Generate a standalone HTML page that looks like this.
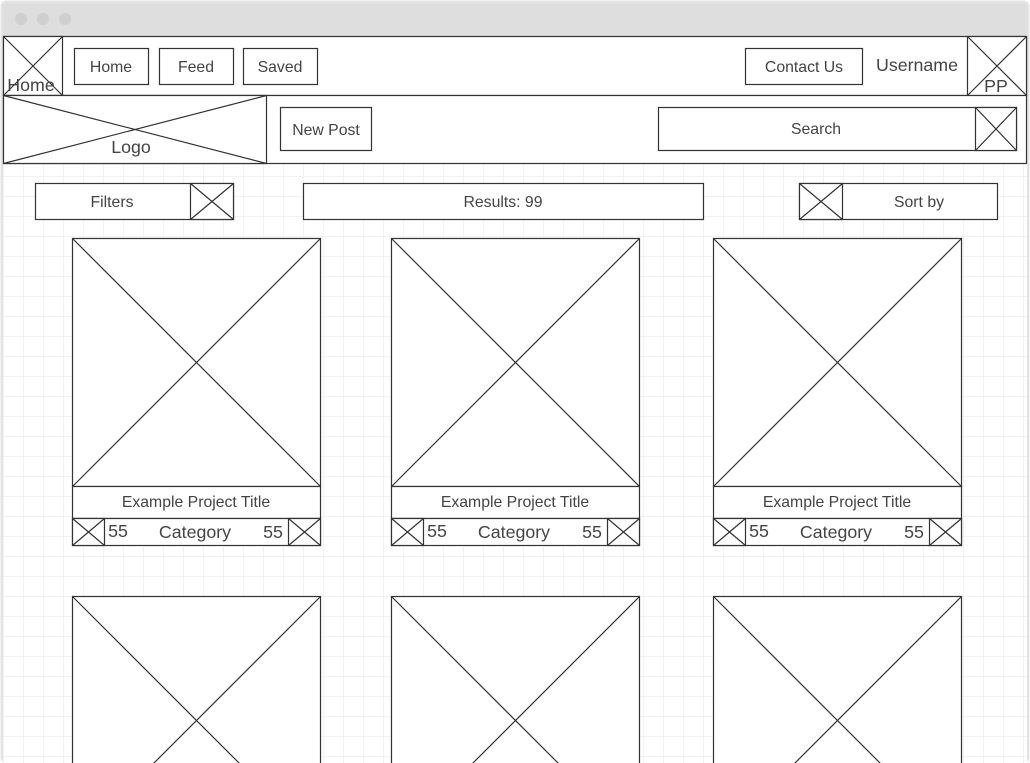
<!DOCTYPE html>
<html><head><meta charset="utf-8"><style>
html,body{margin:0;padding:0;background:#fff;width:1030px;height:763px;overflow:hidden;}
svg{display:block;}
text{font-family:"Liberation Sans",sans-serif;fill:#444;}
</style></head><body>
<svg width="1030" height="763" viewBox="0 0 1030 763" xmlns="http://www.w3.org/2000/svg">
<defs>
<pattern id="g" x="3" y="-4" width="20" height="20" patternUnits="userSpaceOnUse">
<path d="M0 0V20M0 0H20" stroke="#e6e6e6" stroke-width="1" fill="none"/>
</pattern>
</defs>
<rect x="0" y="0" width="1030" height="763" fill="#fff"/>
<rect x="0.5" y="0.5" width="1029" height="762.5" rx="6" fill="#e4e4e4"/>
<rect x="3" y="3" width="1024" height="33" rx="4" fill="#dedede"/>
<circle cx="21" cy="19" r="6" fill="#cfcfcf"/><circle cx="43" cy="19" r="6" fill="#cfcfcf"/><circle cx="65" cy="19" r="6" fill="#cfcfcf"/>
<rect x="3" y="36" width="1024" height="727" fill="#fff"/>
<rect x="3" y="36" width="1024" height="727" fill="url(#g)"/>
<g stroke="#333" stroke-width="1.2" fill="#fff">
<rect x="3.5" y="36.5" width="1023" height="59"/>
<rect x="3.5" y="36.5" width="59" height="59"/><path d="M3.5 36.5L62.5 95.5M62.5 36.5L3.5 95.5"/>
<rect x="74.5" y="48.5" width="74" height="36"/>
<rect x="159.5" y="48.5" width="74" height="36"/>
<rect x="243.5" y="48.5" width="74" height="36"/>
<rect x="745.5" y="48.5" width="117" height="36"/>
<rect x="967.5" y="36.5" width="59" height="59"/><path d="M967.5 36.5L1026.5 95.5M1026.5 36.5L967.5 95.5"/>
<rect x="3.5" y="95.5" width="1023" height="68"/>
<rect x="3.5" y="95.5" width="263" height="68"/><path d="M3.5 95.5L266.5 163.5M266.5 95.5L3.5 163.5"/>
<rect x="280.5" y="107.5" width="91" height="43"/>
<rect x="658.5" y="107.5" width="358" height="43"/>
<rect x="975.5" y="107.5" width="41" height="43"/><path d="M975.5 107.5L1016.5 150.5M1016.5 107.5L975.5 150.5"/>
<rect x="35.5" y="183.5" width="198" height="36"/>
<rect x="190.5" y="183.5" width="43" height="36"/><path d="M190.5 183.5L233.5 219.5M233.5 183.5L190.5 219.5"/>
<rect x="303.5" y="183.5" width="400" height="36"/>
<rect x="799.5" y="183.5" width="198" height="36"/>
<rect x="799.5" y="183.5" width="43" height="36"/><path d="M799.5 183.5L842.5 219.5M842.5 183.5L799.5 219.5"/>
</g>
<g stroke="#333" stroke-width="1.2" fill="#fff">
<rect x="72.5" y="238.5" width="248" height="248"/><path d="M72.5 238.5L320.5 486.5M320.5 238.5L72.5 486.5"/>
<rect x="72.5" y="486.5" width="248" height="32"/><rect x="72.5" y="518.5" width="248" height="27"/>
<rect x="72.5" y="518.5" width="32" height="27"/><path d="M72.5 518.5L104.5 545.5M104.5 518.5L72.5 545.5"/>
<rect x="288.5" y="518.5" width="32" height="27"/><path d="M288.5 518.5L320.5 545.5M320.5 518.5L288.5 545.5"/>
<rect x="391.5" y="238.5" width="248" height="248"/><path d="M391.5 238.5L639.5 486.5M639.5 238.5L391.5 486.5"/>
<rect x="391.5" y="486.5" width="248" height="32"/><rect x="391.5" y="518.5" width="248" height="27"/>
<rect x="391.5" y="518.5" width="32" height="27"/><path d="M391.5 518.5L423.5 545.5M423.5 518.5L391.5 545.5"/>
<rect x="607.5" y="518.5" width="32" height="27"/><path d="M607.5 518.5L639.5 545.5M639.5 518.5L607.5 545.5"/>
<rect x="713.5" y="238.5" width="248" height="248"/><path d="M713.5 238.5L961.5 486.5M961.5 238.5L713.5 486.5"/>
<rect x="713.5" y="486.5" width="248" height="32"/><rect x="713.5" y="518.5" width="248" height="27"/>
<rect x="713.5" y="518.5" width="32" height="27"/><path d="M713.5 518.5L745.5 545.5M745.5 518.5L713.5 545.5"/>
<rect x="929.5" y="518.5" width="32" height="27"/><path d="M929.5 518.5L961.5 545.5M961.5 518.5L929.5 545.5"/>
<rect x="72.5" y="596.5" width="248" height="248"/><path d="M72.5 596.5L320.5 844.5M320.5 596.5L72.5 844.5"/>
<rect x="391.5" y="596.5" width="248" height="248"/><path d="M391.5 596.5L639.5 844.5M639.5 596.5L391.5 844.5"/>
<rect x="713.5" y="596.5" width="248" height="248"/><path d="M713.5 596.5L961.5 844.5M961.5 596.5L713.5 844.5"/>
</g>
<g font-size="15.8" text-anchor="middle">
<text x="111" y="72">Home</text>
<text x="196" y="72">Feed</text>
<text x="280" y="72">Saved</text>
<text x="804" y="72">Contact Us</text>
<text x="326" y="135">New Post</text>
<text x="816" y="134">Search</text>
<text x="112" y="207">Filters</text>
<text x="503" y="207">Results: 99</text>
<text x="919" y="207">Sort by</text>
<text x="196" y="507">Example Project Title</text>
<text x="515" y="507">Example Project Title</text>
<text x="837" y="507">Example Project Title</text>
</g>
<g font-size="17.8" text-anchor="middle">
<text x="31" y="91">Home</text>
<text x="917" y="71">Username</text>
<text x="996" y="92">PP</text>
<text x="131" y="153">Logo</text>
<text x="118" y="537">55</text><text x="195" y="538">Category</text><text x="273" y="538">55</text>
<text x="437" y="537">55</text><text x="514" y="538">Category</text><text x="592" y="538">55</text>
<text x="759" y="537">55</text><text x="836" y="538">Category</text><text x="914" y="538">55</text>
</g>
</svg>
</body></html>
